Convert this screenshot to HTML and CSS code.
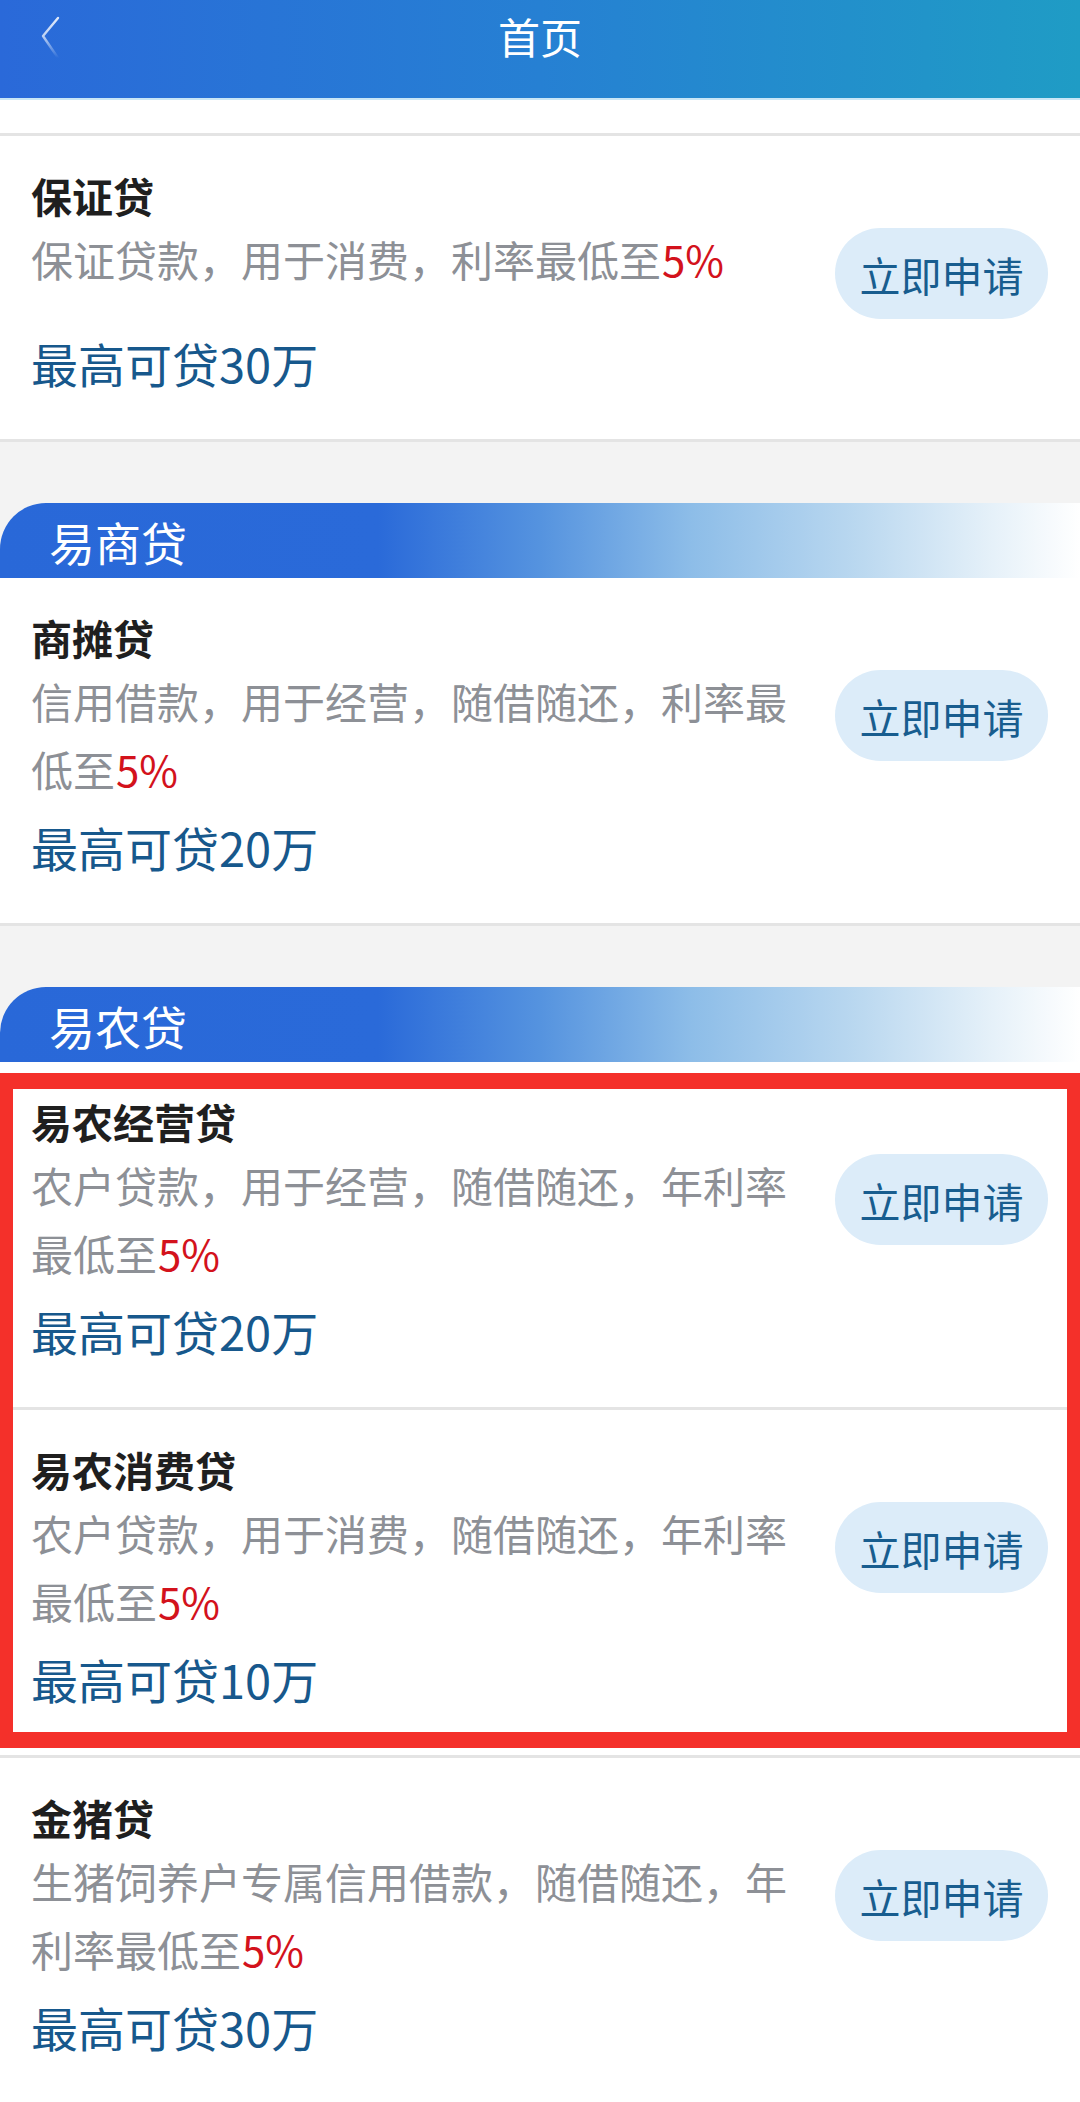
FILE: index.html
```html
<!DOCTYPE html>
<html lang="zh-CN">
<head>
  <meta charset="UTF-8" />
  <meta name="viewport" content="width=device-width, initial-scale=1.0"/>
  <title>首页</title>
  <link rel="stylesheet" href="styles.css">
</head>
<body>

<header class="topbar">
  <button class="back" aria-label="返回">
    <svg viewBox="0 0 30 50" width="30" height="50">
      <defs>
        <linearGradient id="fade" x1="0" y1="0" x2="0" y2="1">
          <stop offset="0" stop-color="#fff" stop-opacity="0.85"/>
          <stop offset="0.45" stop-color="#fff" stop-opacity="0.7"/>
          <stop offset="1" stop-color="#fff" stop-opacity="0"/>
        </linearGradient>
      </defs>
      <path d="M20 4 L5 22 L20 44" fill="none" stroke="url(#fade)" stroke-width="2.4" stroke-linecap="round" stroke-linejoin="round"/>
    </svg>
  </button>
  <h1 class="topbar-title">首页</h1>
</header>

<div class="spacer"></div>

<main>
  <section class="loan-list first">
    <div class="loan">
      <h3 class="loan-name">保证贷</h3>
      <div class="loan-row">
        <p class="loan-desc">保证贷款，用于消费，利率最低至<span class="rate">5%</span></p>
        <a class="apply" href="#">立即申请</a>
      </div>
      <p class="loan-max">最高可贷30万</p>
    </div>
  </section>

  <h2 class="band">易商贷</h2>
  <section class="loan-list">
    <div class="loan">
      <h3 class="loan-name">商摊贷</h3>
      <div class="loan-row">
        <p class="loan-desc">信用借款，用于经营，随借随还，利率最低至<span class="rate">5%</span></p>
        <a class="apply" href="#">立即申请</a>
      </div>
      <p class="loan-max">最高可贷20万</p>
    </div>
  </section>

  <h2 class="band">易农贷</h2>
  <section class="loan-list">
    <div class="highlight">
      <div class="loan">
        <h3 class="loan-name">易农经营贷</h3>
        <div class="loan-row">
          <p class="loan-desc">农户贷款，用于经营，随借随还，年利率最低至<span class="rate">5%</span></p>
          <a class="apply" href="#">立即申请</a>
        </div>
        <p class="loan-max">最高可贷20万</p>
      </div>
      <div class="loan">
        <h3 class="loan-name">易农消费贷</h3>
        <div class="loan-row">
          <p class="loan-desc">农户贷款，用于消费，随借随还，年利率最低至<span class="rate">5%</span></p>
          <a class="apply" href="#">立即申请</a>
        </div>
        <p class="loan-max">最高可贷10万</p>
      </div>
    </div>
    <div class="loan">
      <h3 class="loan-name">金猪贷</h3>
      <div class="loan-row">
        <p class="loan-desc">生猪饲养户专属信用借款，随借随还，年利率最低至<span class="rate">5%</span></p>
        <a class="apply" href="#">立即申请</a>
      </div>
      <p class="loan-max">最高可贷30万</p>
    </div>
  </section>
</main>

</body>
</html>
```

FILE: styles.css
```css
* {
  margin: 0;
  padding: 0;
  box-sizing: border-box;
}

html, body {
  font-family: "Noto Sans CJK SC", "Noto Sans", sans-serif;
  background-color: #fff;
  color: #222;
}

a {
  text-decoration: none;
  color: inherit;
}

/* Top bar */

.topbar {
  position: relative;
  height: 98px;
  display: flex;
  justify-content: center;
  align-items: center;
  background: linear-gradient(90deg, #2a69d9 0%, #2680d3 50%, #1f9cc5 100%);
}

.back {
  position: absolute;
  left: 38px;
  top: 14px;
  background: none;
  border: none;
}

.back svg {
  display: block;
}

.topbar-title {
  font-size: 42px;
  font-weight: 400;
  color: #fff;
  line-height: 1;
  margin-top: -26px;
}

.spacer {
  height: 35px;
  border-top: 2px solid #c9e6f6;
}

/* Loan lists */

.loan-list {
  background: #fff;
}

.loan-list.first {
  border-top: 3px solid #e4e4e4;
}

.loan {
  padding: 29px 32px 48px 31px;
  border-bottom: 3px solid #e4e4e4;
  background: #fff;
}

.loan-name {
  font-size: 41px;
  line-height: 60px;
  font-weight: 700;
  color: #1f1f1f;
}

.loan-row {
  display: flex;
  justify-content: space-between;
  align-items: flex-start;
  gap: 40px;
}

.loan-desc {
  width: 770px;
  font-size: 42px;
  line-height: 68px;
  color: #8d9096;
}

.rate {
  color: #d3121c;
  margin-left: 1px;
}

.apply {
  flex: none;
  width: 213px;
  height: 91px;
  margin-top: 3px;
  border-radius: 46px;
  background: #dcecf9;
  color: #185d8f;
  font-size: 41px;
  display: flex;
  justify-content: center;
  align-items: center;
}

.loan-max {
  margin-top: 16px;
  font-size: 47px;
  line-height: 56px;
  color: #17588c;
}

/* Section band */

.band {
  margin-top: 61px;
  height: 75px;
  padding-left: 49px;
  display: flex;
  align-items: center;
  font-size: 46px;
  font-weight: 400;
  color: #fff;
  border-top-left-radius: 46px;
  background: linear-gradient(90deg, #2968d8 0%, #2a6ad9 35%, #5593df 50%, #8dbde8 64%, #bcd9f0 80%, #e6f1f9 92%, #fff 100%);
}

main {
  background: #f3f3f3;
}

/* Red marker around the farm loans */

.highlight {
  position: relative;
}

.highlight::after {
  content: "";
  position: absolute;
  top: 11px;
  bottom: 10px;
  left: 0;
  right: 0;
  border-style: solid;
  border-color: #f4302a;
  border-width: 16px 13px;
  pointer-events: none;
}
```
